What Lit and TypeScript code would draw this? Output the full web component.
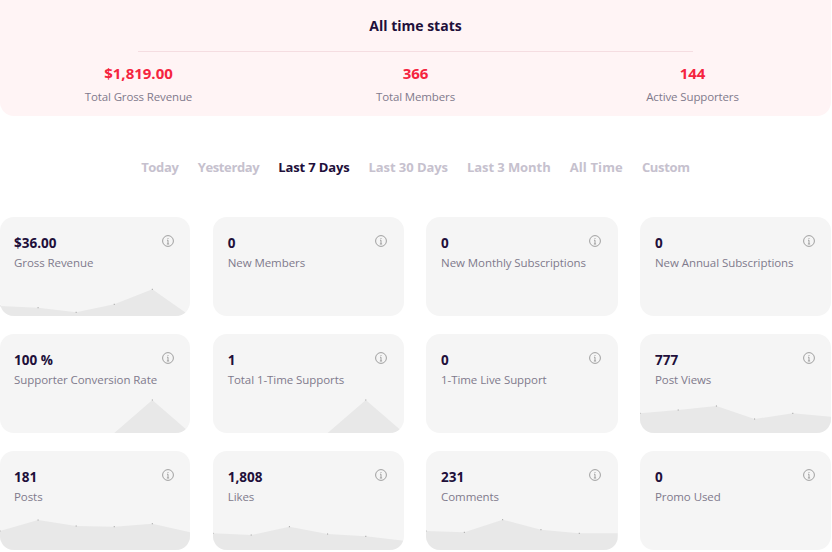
import { LitElement, html, css, svg } from "lit";
import { customElement } from "lit/decorators.js";

interface Stat { value: string; label: string; pts: number[] }
const F = [0, 0, 0, 0, 0, 0];
const STATS: Stat[] = [
  { value: "$36.00", label: "Gross Revenue", pts: [10, 8.3, 3.7, 11.7, 26.7, 0] },
  { value: "0", label: "New Members", pts: F },
  { value: "0", label: "New Monthly Subscriptions", pts: F },
  { value: "0", label: "New Annual Subscriptions", pts: F },
  { value: "100 %", label: "Supporter Conversion Rate", pts: [0, 0, 0, 0, 33, 0] },
  { value: "1", label: "Total 1-Time Supports", pts: [0, 0, 0, 0, 33, 0] },
  { value: "0", label: "1-Time Live Support", pts: F },
  { value: "777", label: "Post Views", pts: [19.7, 23, 27, 14, 19.7, 16.3] },
  { value: "181", label: "Posts", pts: [19, 30, 24, 23.3, 26.3, 17.7] },
  { value: "1,808", label: "Likes", pts: [16.7, 15, 23.3, 16, 13.7, 9.3] },
  { value: "231", label: "Comments", pts: [19, 17.7, 30.3, 20.3, 16.7, 16.7] },
  { value: "0", label: "Promo Used", pts: F },
];
const TOTALS = [
  ["$1,819.00", "Total Gross Revenue"],
  ["366", "Total Members"],
  ["144", "Active Supporters"],
];
const TABS: [string, number][] = [
  ["Today", -0.3],
  ["Yesterday", -0.37],
  ["Last 7 Days", -0.15],
  ["Last 30 Days", -0.07],
  ["Last 3 Month", -0.07],
  ["All Time", 0.13],
  ["Custom", -0.3],
];
const H = 45;
const W = 191;

function chart(pts: number[]) {
  const xy = pts.map((d, i) => [(i * W) / 5, H - d]);
  const line = xy.map(([x, y]) => `${x.toFixed(1)},${y}`).join(" ");
  return html`<svg class="chart" viewBox="0 0 ${W} ${H}" preserveAspectRatio="none" aria-hidden="true">
    <polygon class="area" points="0,${H} ${line} ${W},${H}"></polygon>
    ${xy
      .slice(0, 5)
      .filter(([, y]) => y < H)
      .map(([x, y]) => svg`<rect class="dot" x=${x - 0.5} y=${y - 0.5} width="1" height="1"></rect>`)}
  </svg>`;
}

const info = html`<svg class="info" viewBox="0 0 12 12" aria-hidden="true">
  <circle cx="6" cy="6" r="5.4"></circle>
  <path d="M6 5.2V9M4.9 9h2.2M5 5.2h1"></path>
  <path d="M6 3v.9"></path>
</svg>`;

@customElement("app-root")
export class AppRoot extends LitElement {
  static styles = css`
    :host {
      display: block;
      width: 831px;
      font-family: "Open Sans", "Noto Sans", sans-serif;
      color: #210f3a;
    }
    .banner {
      height: 116px;
      box-sizing: border-box;
      background: #fff4f5;
      border-radius: 0 0 14px 14px;
      padding-top: 16px;
    }
    h2 {
      margin: 0;
      font-size: 14px;
      line-height: 20px;
      font-weight: 700;
      text-align: center;
    }
    .rule {
      height: 1px;
      background: #f5dde1;
      margin: 15px 138px 0;
    }
    .totals {
      display: grid;
      grid-template-columns: repeat(3, 1fr);
      margin-top: 11px;
      text-align: center;
    }
    .total-value {
      font-size: 15px;
      line-height: 20px;
      font-weight: 700;
      color: #f5243f;
    }
    .total-label {
      font-size: 11.5px;
      line-height: 16px;
      margin-top: 6px;
      letter-spacing: -0.13px;
      color: #7f7a8c;
    }
    .tabs {
      display: flex;
      justify-content: center;
      gap: 19px;
      margin-top: 41px;
      font-size: 13px;
      line-height: 20px;
      font-weight: 700;
      color: #c6c1ce;
    }
    .tabs .on {
      color: #210f3a;
    }
    .grid {
      display: grid;
      grid-template-columns: 190.4px 191px 191.6px 191px;
      justify-content: space-between;
      row-gap: 18px;
      margin-top: 40px;
    }
    .card {
      height: 99px;
      background: #f5f5f5;
      border-radius: 14px;
      overflow: hidden;
      display: flex;
      flex-direction: column;
    }
    .head {
      display: flex;
      justify-content: space-between;
      padding: 16px 16.5px 0 15px;
    }
    .card:nth-child(4n + 1) .head {
      padding-left: 14px;
    }
    .card:nth-child(4n) .head {
      padding-right: 16px;
    }
    .value {
      font-size: 13.5px;
      line-height: 20px;
      font-weight: 700;
    }
    .label {
      font-size: 11.5px;
      line-height: 16px;
      margin-top: 2px;
      letter-spacing: -0.07px;
      color: #7f7a8c;
    }
    .info {
      width: 12px;
      height: 12px;
      margin-top: 2px;
      fill: none;
      stroke: #969696;
      stroke-width: 0.9;
      flex: none;
    }
    .chart {
      display: block;
      width: 100%;
      height: ${H}px;
      margin-top: auto;
    }
    .area {
      fill: #e8e8e8;
    }
    .dot {
      fill: #9a9a9a;
    }
  `;

  render() {
    return html`
      <section class="banner">
        <h2>All time stats</h2>
        <div class="rule"></div>
        <div class="totals">
          ${TOTALS.map(([v, l]) => html`<div><div class="total-value">${v}</div><div class="total-label">${l}</div></div>`)}
        </div>
      </section>
      <nav class="tabs">
        ${TABS.map(
          ([t, track]) => html`<span class=${t === "Last 7 Days" ? "on" : ""} style="letter-spacing:${track}px">${t}</span>`
        )}
      </nav>
      <div class="grid">
        ${STATS.map(
          (s) => html`<div class="card">
            <div class="head">
              <div><div class="value">${s.value}</div><div class="label">${s.label}</div></div>
              ${info}
            </div>
            ${chart(s.pts)}
          </div>`
        )}
      </div>
    `;
  }
}
